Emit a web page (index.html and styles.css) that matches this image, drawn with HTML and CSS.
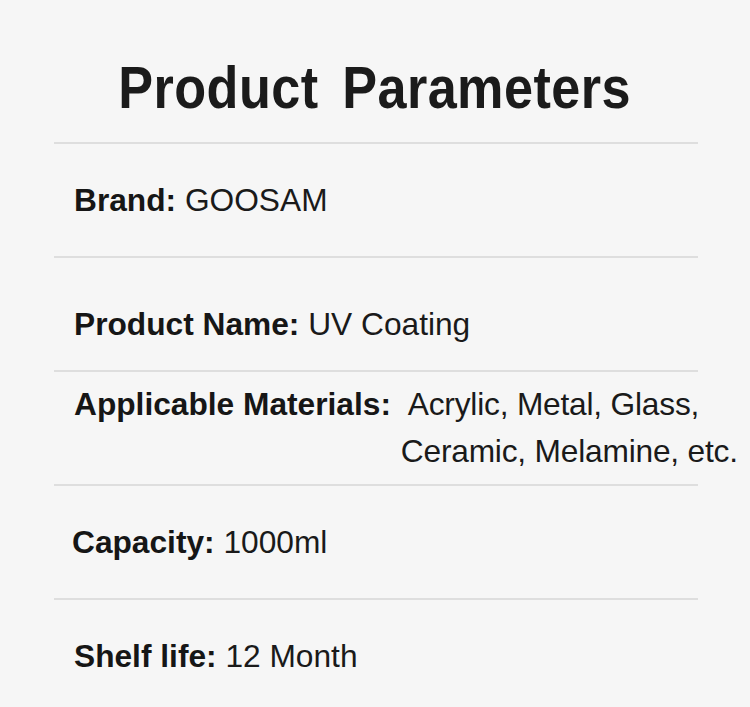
FILE: index.html
```html
<!DOCTYPE html>
<html lang="en">
<head>
<meta charset="utf-8">
<title>Product Parameters</title>
<link rel="stylesheet" href="styles.css">
</head>
<body>
<main class="sheet">
  <header class="head">
    <h1 class="title">Product Parameters</h1>
  </header>
  <ul class="params">
    <li class="row">
      <p class="entry"><b class="label">Brand:</b> GOOSAM</p>
    </li>
    <li class="row row-low">
      <p class="entry"><b class="label">Product Name:</b> UV Coating</p>
    </li>
    <li class="row">
      <p class="entry"><b class="label">Applicable Materials:</b> <span class="multi">Acrylic, Metal, Glass,<br>Ceramic, Melamine, etc.</span></p>
    </li>
    <li class="row">
      <p class="entry entry-shift"><b class="label">Capacity:</b> 1000ml</p>
    </li>
    <li class="row">
      <p class="entry"><b class="label">Shelf life:</b> 12 Month</p>
    </li>
  </ul>
</main>
</body>
</html>
```

FILE: styles.css
```css
html, body {
  margin: 0;
  padding: 0;
  background: #f6f6f6;
}

body {
  font-family: "Liberation Sans", Arial, sans-serif;
  color: #1a1a1a;
  width: 750px;
  height: 707px;
  overflow: hidden;
}

.sheet {
  display: flex;
  flex-direction: column;
}

.head {
  box-sizing: border-box;
  height: 142px;
  padding-top: 58px;
  display: flex;
  justify-content: center;
}

.title {
  margin: 0;
  font-family: "Liberation Sans", Arial, sans-serif;
  font-weight: 700;
  font-size: 60px;
  line-height: 60px;
  color: #1b1b1b;
  word-spacing: 10px;
  letter-spacing: 0.5px;
  transform: scaleX(0.87);
  white-space: nowrap;
}

.params {
  list-style: none;
  margin: 0 52px 0 54px;
  padding: 0;
}

.row {
  box-sizing: border-box;
  height: 114px;
  border-top: 2px solid #dedede;
  display: flex;
  align-items: center;
  padding-left: 20px;
}

.row-low {
  padding-top: 20px;
}

.entry {
  margin: 0;
  font-size: 31.7px;
  line-height: 47px;
  white-space: nowrap;
  color: #1a1a1a;
}

.entry-shift {
  margin-left: -2px;
}

.label {
  font-weight: 700;
  color: #161616;
}

.multi {
  display: inline-block;
  vertical-align: top;
  margin-left: 1px;
  letter-spacing: -0.2px;
  text-indent: 7px;
}
```
